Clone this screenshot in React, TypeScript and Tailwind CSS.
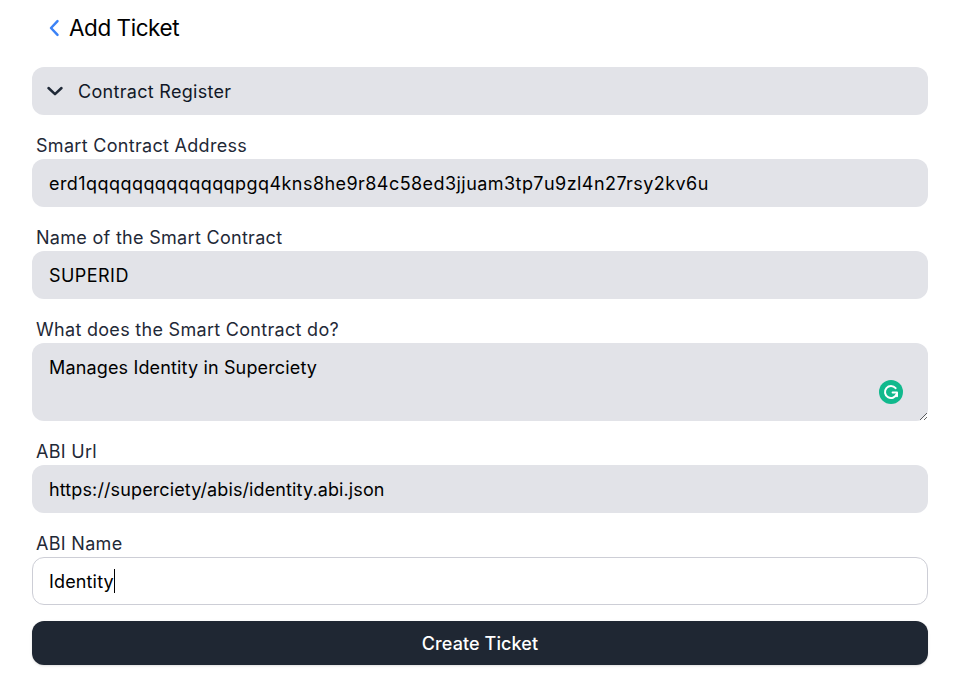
const font = "font-['Inter',sans-serif]";
const labelClass = "h-6 pl-1 text-[18px] leading-[22px] tracking-[0.3px] text-[#1f2937]";

function Field({ label, value, tracking }: { label: string; value: string; tracking: string }) {
  return (
    <div className="flex flex-col">
      <label className={labelClass}>{label}</label>
      <input
        readOnly
        value={value}
        className={`h-12 w-full rounded-xl bg-[#e2e3e8] px-[17px] text-[18px] text-black outline-none ${tracking}`}
      />
    </div>
  );
}

export default function App() {
  return (
    <div className={`${font} min-h-[699px] bg-white pl-8 pr-[25px]`}>
      <header className="flex h-[67px] items-center pb-[12px] pl-4">
        <svg width="12" height="18" viewBox="0 0 12 18" fill="none" stroke="#3b82f6" strokeWidth="2.5" strokeLinecap="round" strokeLinejoin="round">
          <path d="M9.5 2.2 3 9l6.5 6.8" />
        </svg>
        <h1 className="ml-[9px] text-[22.5px] leading-8 tracking-[-0.45px] text-black">Add Ticket</h1>
      </header>

      <div className="flex flex-col gap-5">
        <button className="flex h-12 w-full items-center rounded-xl bg-[#e2e3e8] pl-[14px] text-[18px] tracking-[0.3px] text-[#111827]">
          <svg width="18" height="18" viewBox="0 0 18 18" fill="none" stroke="#1f2937" strokeWidth="2.5" strokeLinecap="round" strokeLinejoin="round">
            <path d="M2.5 6 9 12.2 15.5 6" />
          </svg>
          <span className="ml-[14px]">Contract Register</span>
        </button>

        <Field
          label="Smart Contract Address"
          value="erd1qqqqqqqqqqqqqpgq4kns8he9r84c58ed3jjuam3tp7u9zl4n27rsy2kv6u"
          tracking="tracking-[0.44px]"
        />

        <Field label="Name of the Smart Contract" value="SUPERID" tracking="tracking-[0.45px]" />

        <div className="relative flex flex-col">
          <label className={labelClass}>What does the Smart Contract do?</label>
          <textarea
            readOnly
            value="Manages Identity in Superciety"
            className="block h-[78px] w-full rounded-xl bg-[#e2e3e8] px-[17px] py-[11px] text-[18px] leading-[28px] tracking-[0.15px] text-black outline-none"
          />
          <span className="absolute left-[847px] top-[61px] flex h-6 w-6 items-center justify-center rounded-full bg-[#11b98d]">
            <svg width="18" height="18" viewBox="0 0 18 18" fill="none" stroke="#ffffff" strokeWidth="2" strokeLinecap="round" strokeLinejoin="round">
              <path d="M13.6 5.2A6 6 0 1 0 14.6 11.2" />
              <path d="M10.6 9.6h4.4v3.6" />
            </svg>
          </span>
        </div>

        <Field label="ABI Url" value="https://superciety/abis/identity.abi.json" tracking="tracking-[0.12px]" />

        <div className="flex flex-col">
          <label className={labelClass}>ABI Name</label>
          <div className="flex h-12 w-full items-center rounded-xl border border-[#cdced6] bg-white pl-4 text-[18px] tracking-[0.15px] text-black">
            <span>Identity</span>
            <span className="h-[24px] w-px bg-black" />
          </div>
        </div>
      </div>

      <button className="mt-4 h-11 w-full rounded-xl bg-[#1f2733] text-[18px] font-medium tracking-[0.1px] text-white shadow-sm">
        Create Ticket
      </button>
    </div>
  );
}
